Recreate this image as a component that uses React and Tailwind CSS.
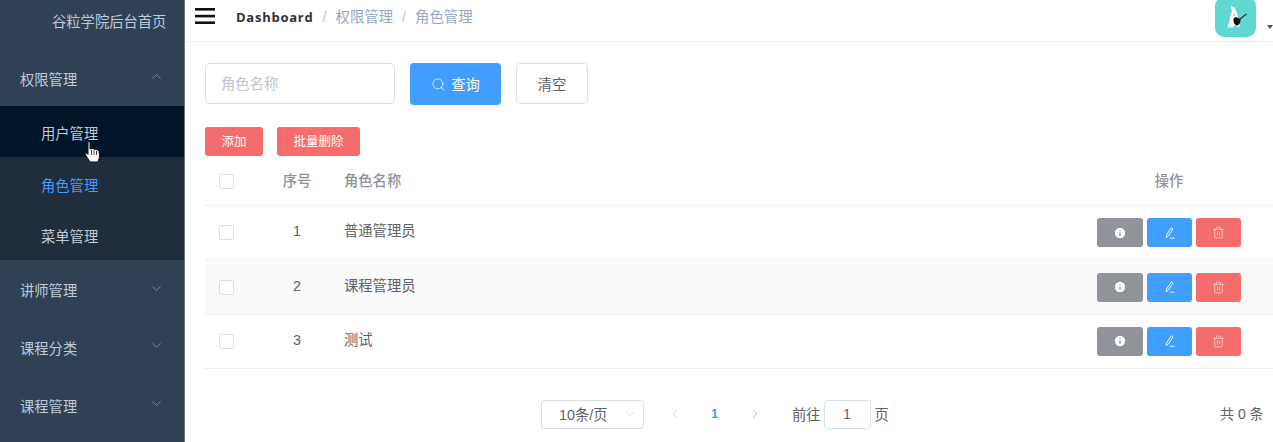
import React from "react";
import { ChevronUp, ChevronDown, ChevronLeft, ChevronRight, Search, Info, Trash2 } from "lucide-react";

const font = { fontFamily: '"Liberation Sans", "Noto Sans CJK SC", sans-serif' };

function Check() {
  return <span className="block w-[15px] h-[15px] rounded-[2px] border border-[#dcdfe6] bg-white" />;
}

function TopMenu({ label, up, cls, labelCls }) {
  const Icon = up ? ChevronUp : ChevronDown;
  return (
    <div className={"flex items-center justify-between pl-5 pr-[20px] text-[14.3px] text-[#bfcbd9] " + cls}>
      <span className={labelCls}>{label}</span>
      <Icon size={15} strokeWidth={1} className="text-[#a3adba] mb-[5px]" />
    </div>
  );
}

function Row({ n, name, striped }) {
  return (
    <div className={"flex items-center h-[54.4px] border-b border-[#ebeef5] text-[14.3px] text-[#606266] " + (striped ? "bg-[#fafafa]" : "bg-white")}>
      <div className="w-[44px] pl-[14px]"><Check /></div>
      <div className="w-[95px] text-center pl-[1px] pb-[1px]">{n}</div>
      <div className="flex-1 pb-[1px]">{name}</div>
      <div className="flex items-center gap-[4px] pr-[32px]">
        <button className="w-[46px] h-[29px] rounded-[3px] bg-[#909399] flex items-center justify-center">
          <Info size={14} strokeWidth={2.4} className="text-[#909399] fill-white" />
        </button>
        <button className="w-[45px] h-[29px] rounded-[3px] bg-[#409eff] flex items-center justify-center">
          <svg width="14" height="14" viewBox="0 0 14 14" fill="none" stroke="#ffffff" strokeWidth="0.9">
            <path d="M3.5 9 L8.3 1.8 L10 3 L5.2 10.2 L3.3 11.6 Z" />
            <path d="M7 12.2 H11.5" />
          </svg>
        </button>
        <button className="w-[45px] h-[29px] rounded-[3px] bg-[#f56c6c] flex items-center justify-center">
          <Trash2 size={13} strokeWidth={1.5} className="text-[#fbd3d3]" />
        </button>
      </div>
    </div>
  );
}

export default function App() {
  return (
    <div className="relative flex w-[1273px] h-[442px] overflow-hidden bg-white" style={font}>
      <aside className="w-[185px] shrink-0 bg-[#304156] border-r border-[#6b7684] flex flex-col">
        <div className="h-[44px] pl-[52px] pt-[2px] flex items-center text-[14.3px] text-[#bfcbd9] whitespace-nowrap">谷粒学院后台首页</div>
        <TopMenu label="权限管理" up cls="h-[62px] pt-[8px]" labelCls="pt-[4px]" />
        <div className="flex flex-col bg-[#1f2d3d] text-[14.3px]">
          <div className="h-[51px] pl-[41px] pt-[7px] flex items-center bg-[#001528] text-[#bfcbd9]">用户管理</div>
          <div className="h-[52px] pl-[41px] pt-[7px] flex items-center text-[#409eff]">角色管理</div>
          <div className="h-[51px] pl-[41px] pt-[7px] flex items-center text-[#bfcbd9]">菜单管理</div>
        </div>
        <TopMenu label="讲师管理" cls="h-[58px] pt-[3px]" labelCls="pt-[2px]" />
        <TopMenu label="课程分类" cls="h-[58px] pt-[1px]" labelCls="pt-[4px]" />
        <TopMenu label="课程管理" cls="h-[58px] pt-[1px]" labelCls="pt-[4px]" />
      </aside>

      <main className="flex-1 min-w-0 flex flex-col">
        <header className="h-[42px] shrink-0 border-b border-[#e9ebee] flex items-center pb-[9px] relative">
          <svg width="20" height="16" viewBox="0 0 20 16" className="ml-[10px]">
            <rect x="0" y="0" width="20" height="2.6" fill="#111" />
            <rect x="0" y="6.8" width="20" height="2.6" fill="#111" />
            <rect x="0" y="13.4" width="20" height="2.6" fill="#111" />
          </svg>
          <div className="flex items-center text-[14.4px] ml-[21px] pt-[3px]">
            <span className="font-bold text-[#303133] tracking-[0.75px]" style={{ fontFamily: '"Open Sans", sans-serif', fontSize: 13 }}>Dashboard</span>
            <span className="text-[#c0c4cc] mx-[9px]">/</span>
            <span className="text-[#97a8be]">权限管理</span>
            <span className="text-[#c0c4cc] mx-[9px]">/</span>
            <span className="text-[#97a8be]">角色管理</span>
          </div>
          <div className="absolute left-[1030px] top-[-3px] w-[41px] h-[40px] rounded-[9px] bg-[#5fd8d2] flex items-center justify-center">
            <svg width="24" height="28" viewBox="0 0 24 28">
              <path d="M7 3 L10 4 L12 8 L13 10 L14 14 L16 23 L13 24 L11 22 L9 24.5 L3.5 24.5 L5.5 18 L6.5 12 L8 9 Z" fill="#fff" />
              <circle cx="10" cy="12" r="0.8" fill="#d0574f" />
              <path d="M9.5 16 C10 14 13 13.5 14 15 L16.5 16 C17 19 15 23 12.5 22.5 C11 22 9 19 9.5 16 Z" fill="#111" />
              <path d="M16 16 L22.5 11" stroke="#333" strokeWidth="1.3" />
            </svg>
          </div>
          <span className="absolute left-[1082px] top-[25px] w-0 h-0 border-x-[3px] border-t-[4px] border-x-transparent border-t-[#555]" />
        </header>

        <div className="flex-1 pl-[20px]">
          <div className="flex items-start mt-[21px]">
            <div className="w-[190px] h-[41px] rounded-[4px] border border-[#dcdfe6] pl-[15px] pt-[2px] flex items-center text-[14.3px] text-[#c0c4cc]">角色名称</div>
            <button className="ml-[15px] w-[91px] h-[42px] rounded-[4px] bg-[#409eff] text-white text-[14.3px] flex items-center justify-center gap-[5px]">
              <Search size={15} strokeWidth={1.2} /> <span className="pt-[4px]">查询</span>
            </button>
            <button className="ml-[15px] w-[72px] h-[41px] pt-[4px] rounded-[4px] border border-[#dcdfe6] text-[#606266] text-[14.3px] flex items-center justify-center">清空</button>
          </div>
          <div className="flex items-center gap-[14px] mt-[22px]">
            <button className="w-[58px] h-[29px] pt-[2px] rounded-[3px] bg-[#f56c6c] text-white text-[12.5px]">添加</button>
            <button className="w-[83px] h-[29px] pt-[2px] rounded-[3px] bg-[#f56c6c] text-white text-[12.5px]">批量删除</button>
          </div>

          <div className="mt-[4px]">
            <div className="flex items-center h-[46px] pb-[2px] border-b border-[#ebeef5] text-[14.3px] text-[#909399]" style={{ fontWeight: 500 }}>
              <div className="w-[44px] pl-[14px]"><Check /></div>
              <div className="w-[95px] text-center pl-[1px]">序号</div>
              <div className="flex-1">角色名称</div>
              <div className="w-[208px] text-center">操作</div>
            </div>
            <Row n="1" name="普通管理员" />
            <Row n="2" name="课程管理员" striped />
            <Row n="3" name="测试" />
          </div>

          <div className="relative flex items-center h-[30px] mt-[30px] text-[14.3px] text-[#606266]">
            <div className="ml-[336px] w-[103px] h-[29px] rounded-[3px] border border-[#dcdfe6] flex items-center justify-between pl-[17px] pr-[6px]">
              <span className="pt-[3px]">10条/页</span>
              <ChevronDown size={14} strokeWidth={1} className="text-[#c0c4cc]" />
            </div>
            <ChevronLeft size={14} strokeWidth={1.2} className="ml-[24px] text-[#c0c4cc]" />
            <span className="ml-[29px] w-[10px] font-bold text-[13px] text-[#409eff]">1</span>
            <ChevronRight size={14} strokeWidth={1.2} className="ml-[27px] text-[#909399]" />
            <span className="ml-[30px] pt-[4px]">前往</span>
            <div className="ml-[3px] w-[47px] h-[29px] pt-[2px] rounded-[3px] border border-[#dcdfe6] flex items-center justify-center">1</div>
            <span className="ml-[4px] pt-[4px]">页</span>
            <span className="absolute left-[1015px] text-[14px]">共 0 条</span>
          </div>
        </div>
      </main>

      <svg className="absolute left-[84px] top-[141px]" width="17" height="22" viewBox="0 0 17 22">
        <path d="M4 1.5 C4 0.5 6 0.5 6 1.5 L6 8 L8 7.5 L10 8 L12 8.5 L15 9.5 L15.5 16 L14 21 L6 21 L1 13 C1 12 2.5 11.5 4 13.5 Z" fill="#fff" stroke="#111" strokeWidth="1" />
        <path d="M7.5 9 V14 M10 9 V14 M12.5 10 V14" stroke="#111" strokeWidth="0.8" />
      </svg>
    </div>
  );
}
